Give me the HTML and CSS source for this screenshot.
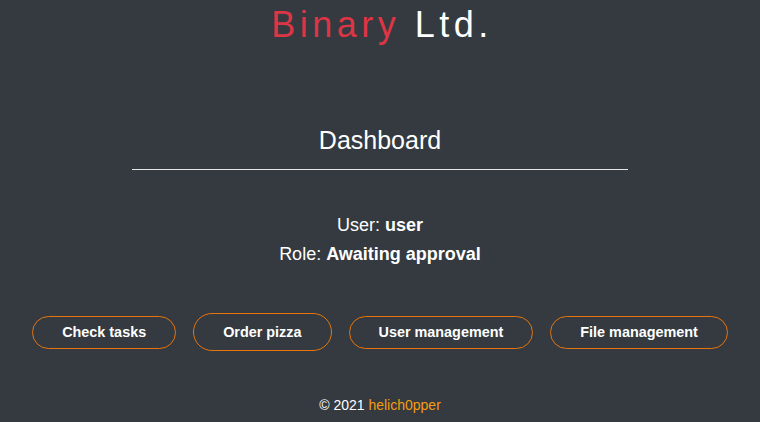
FILE: index.html
```html
<!DOCTYPE html>
<html>
<head>
<meta charset="utf-8">
<link rel="stylesheet" href="styles.css">
</head>
<body>
<header class="brand"><span class="brand-red">Binary</span> <span class="brand-white">Ltd.</span></header>
<main class="main">
  <h1 class="title">Dashboard</h1>
  <hr class="rule">
  <div class="info">
    <p class="line">User: <b>user</b></p>
    <p class="line">Role: <b>Awaiting approval</b></p>
  </div>
  <div class="actions">
    <a class="btn">Check tasks</a>
    <a class="btn btn-tall">Order pizza</a>
    <a class="btn">User management</a>
    <a class="btn">File management</a>
  </div>
</main>
<footer class="footer">© 2021 <span class="author">helich0pper</span></footer>
</body>
</html>
```
FILE: styles.css
```css
html, body {
  margin: 0;
  padding: 0;
  background: #343a40;
  color: #fff;
  font-family: "Liberation Sans", Arial, sans-serif;
  height: 422px;
  overflow: hidden;
}
body {
  display: flex;
  flex-direction: column;
  align-items: center;
}
.brand {
  font-family: "Liberation Sans", Arial, sans-serif;
  font-size: 36px;
  letter-spacing: 4.5px;
  line-height: 50px;
  margin-top: 0;
  padding-left: 4px;
}
.brand-red { color: #dc3545; }
.brand-white { color: #fff; }
.main {
  display: flex;
  flex-direction: column;
  align-items: center;
  width: 100%;
}
.title {
  font-weight: normal;
  font-size: 25px;
  margin: 74px 0 0;
  line-height: 32px;
}
.rule {
  width: 496px;
  border: 0;
  border-top: 1px solid #e6e6e6;
  margin: 13px 0 0;
}
.info {
  margin-top: 41px;
  text-align: center;
}
.line {
  margin: 0;
  font-size: 18px;
  line-height: 29px;
}
.actions {
  display: flex;
  align-items: center;
  gap: 17px;
  margin-top: 44px;
}
.btn {
  font-size: 14.4px;
  font-weight: bold;
  color: #fff;
  border: 1px solid #e8740c;
  border-radius: 17px;
  padding: 0 29px;
  height: 31px;
  line-height: 31px;
  display: block;
}
.btn-tall {
  height: 36px;
  line-height: 36px;
  border-radius: 19px;
}
.footer {
  margin-top: auto;
  font-size: 14px;
  line-height: 18px;
  padding-bottom: 8px;
}
.author { color: #f39c12; }
```
